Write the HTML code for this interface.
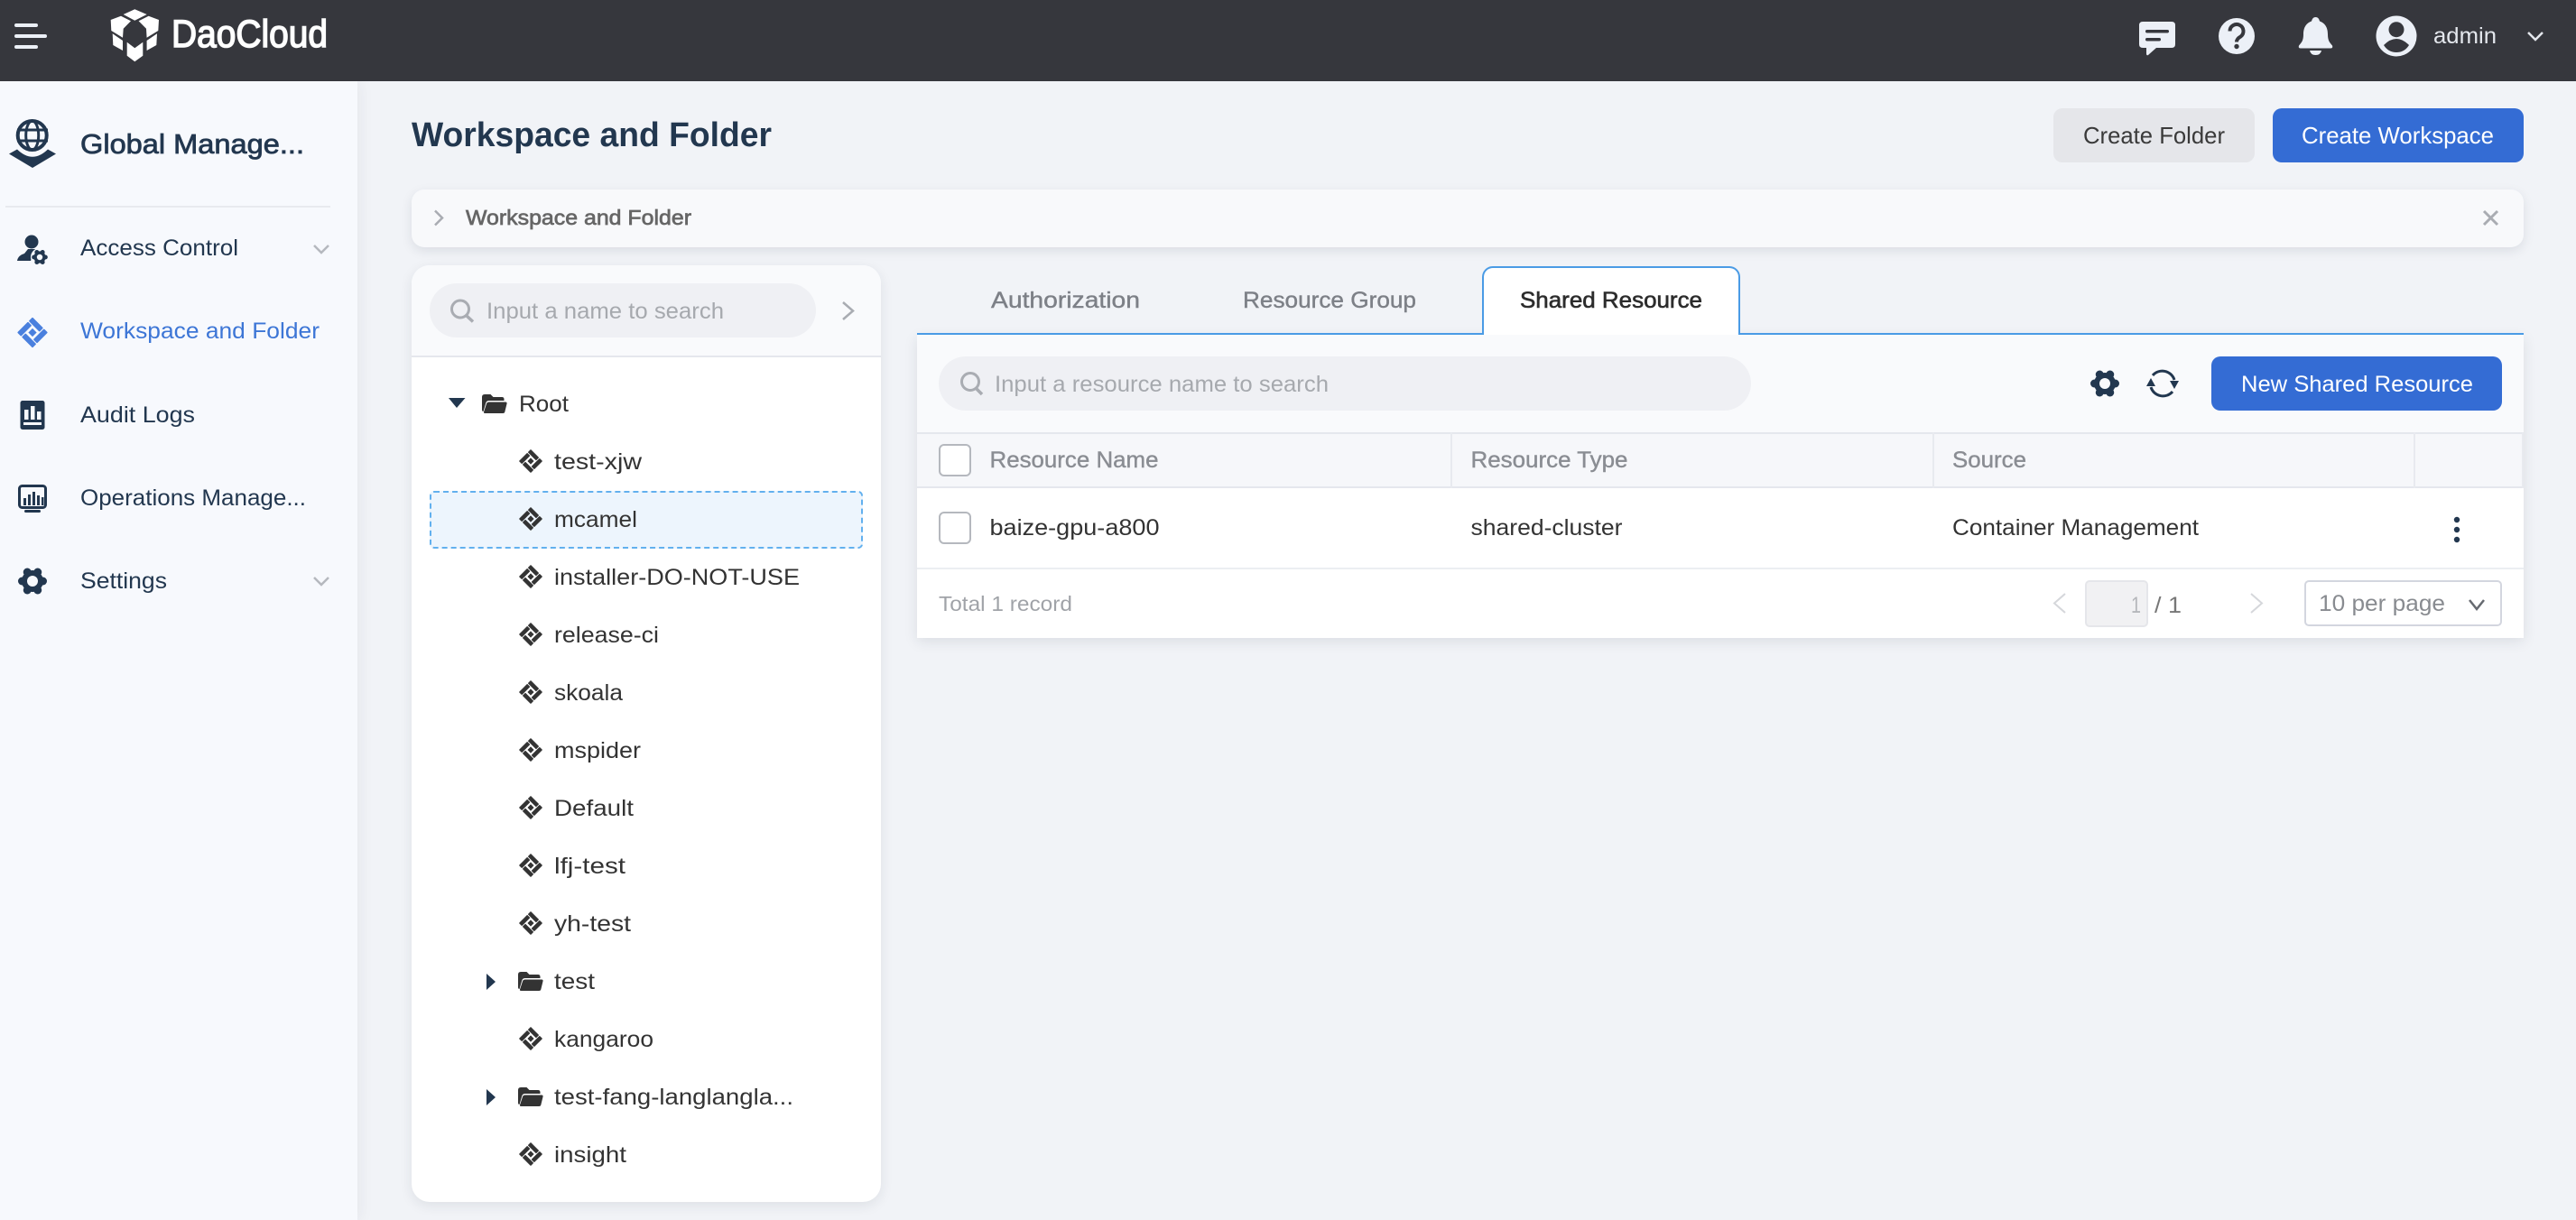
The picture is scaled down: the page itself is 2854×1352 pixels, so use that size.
<!DOCTYPE html>
<html><head><meta charset="utf-8"><style>
html,body{margin:0;padding:0;width:2854px;height:1352px;overflow:hidden;background:#f1f3f7}
.b{position:absolute;box-sizing:border-box}
svg{position:absolute;left:0;top:0}
text{font-family:"Liberation Sans",sans-serif;font-size:25px;fill:#333}
.nav{fill:#22374f}.tree{fill:#333}.ph{fill:#a6a9ae}.th{fill:#8a8d93;stroke:#8a8d93;stroke-width:.4}
</style></head><body>
<div class="b" style="left:0;top:90px;width:396px;height:1262px;background:#f7f9fd;box-shadow:4px 0 14px rgba(30,40,60,.05)"></div>
<div class="b" style="left:0;top:0;width:2854px;height:90px;background:#36373d"></div>
<div class="b" style="left:2275px;top:120px;width:223px;height:60px;background:#e5e6ea;border-radius:10px"></div>
<div class="b" style="left:2518px;top:120px;width:278px;height:60px;background:#346cd4;border-radius:10px"></div>
<div class="b" style="left:456px;top:210px;width:2340px;height:64px;background:#f8f9fb;border-radius:14px;box-shadow:0 4px 12px rgba(30,40,60,.1)"></div>
<div class="b" style="left:456px;top:294px;width:520px;height:1038px;background:#fff;border-radius:20px;box-shadow:0 4px 14px rgba(30,40,60,.09);overflow:hidden">
<div class="b" style="left:0;top:0;width:520px;height:102px;background:#f9fafc;border-bottom:2px solid #e5e7ed"></div>
<div class="b" style="left:20px;top:20px;width:428px;height:60px;background:#eff0f4;border-radius:30px"></div>
<div class="b" style="left:20px;top:250px;width:480px;height:64px;background:#edf5fd;border:2px dashed #62b0ee;border-radius:5px"></div>
</div>
<div class="b" style="left:1016px;top:371px;width:1780px;height:336px;background:#fff;box-shadow:0 4px 14px rgba(30,40,60,.1)">
<div class="b" style="left:0;top:0;width:1780px;height:108px;background:#f9fafc"></div>
<div class="b" style="left:24px;top:24px;width:900px;height:60px;background:#eff0f4;border-radius:30px"></div>
<div class="b" style="left:1434px;top:24px;width:322px;height:60px;background:#346cd4;border-radius:10px"></div>
<div class="b" style="left:0;top:108px;width:1780px;height:62px;background:#f6f7fa;border-top:2px solid #e5e7ed;border-bottom:2px solid #e5e7ed"></div>
<div class="b" style="left:591px;top:108px;width:2px;height:62px;background:#e8eaef"></div>
<div class="b" style="left:1125px;top:108px;width:2px;height:62px;background:#e8eaef"></div>
<div class="b" style="left:1658px;top:108px;width:2px;height:62px;background:#e8eaef"></div>
<div class="b" style="left:1778px;top:108px;width:2px;height:62px;background:#e8eaef"></div>
<div class="b" style="left:0;top:258px;width:1780px;height:2px;background:#eceef2"></div>
<div class="b" style="left:24px;top:121px;width:36px;height:36px;background:#fff;border:2px solid #b5b8be;border-radius:6px"></div>
<div class="b" style="left:24px;top:196px;width:36px;height:36px;background:#fff;border:2px solid #b5b8be;border-radius:6px"></div>
<div class="b" style="left:1294px;top:272px;width:70px;height:52px;background:#f1f1f3;border:2px solid #e5e6ea;border-radius:5px"></div>
<div class="b" style="left:1537px;top:272px;width:219px;height:51px;background:#fff;border:2px solid #d3d6df;border-radius:5px"></div>
</div>
<div class="b" style="left:1016px;top:369px;width:1780px;height:2px;background:#4a9be5"></div>
<div class="b" style="left:1642px;top:295px;width:286px;height:76px;background:#fff;border:2px solid #4a9be5;border-bottom:0;border-radius:12px 12px 0 0"></div>

<svg width="2854" height="1352" viewBox="0 0 2854 1352" xmlns="http://www.w3.org/2000/svg">
<defs>
<g id="ws"><g transform="rotate(45)">
<rect x="-11" y="-11" width="15.500" height="5.500" rx=".8"/><rect x="5.500" y="-11" width="5.500" height="15.500" rx=".8"/><rect x="-4.500" y="5.500" width="15.500" height="5.500" rx=".8"/><rect x="-11" y="-4.500" width="5.500" height="15.500" rx=".8"/><rect x="-3" y="-3" width="6" height="6"/>
</g></g>
<g id="fo">
<path d="M0 3Q0 0 3 0H9.500L12.500 3H22Q24.500 3 24.500 5.500V7H8Q5 7 4.300 9.500L1.500 19Q0 19 0 17Z"/>
<path d="M8 8.500H26Q28 8.500 27.500 10.500L25.300 19.500Q25 21 23 21H3.500Q1.500 21 2 19.500L5 10.500Q5.500 8.500 8 8.500Z"/>
</g>
<g id="gear">
<circle r="12"/><circle cx="11.500" r="4.500"/><circle cx="-11.500" r="4.500"/><circle cx="5.750" cy="-9.960" r="4.500"/><circle cx="-5.750" cy="-9.960" r="4.500"/><circle cx="5.750" cy="9.960" r="4.500"/><circle cx="-5.750" cy="9.960" r="4.500"/>
</g>
</defs>

<!-- top bar -->
<g fill="#ecf0f7">
<rect x="16" y="26" width="26" height="4" rx="2"/><rect x="16" y="38" width="36" height="4" rx="2"/><rect x="16" y="50" width="26" height="4" rx="2"/>
</g>
<g fill="#fff">
<polygon points="136.700,16 149.300,10.300 162.700,16 149.300,22.700"/>
<polygon points="122.700,22 134,17.700 145,23.300 136.700,31.700 136,41.700 123.300,34"/>
<polygon points="176,22 164.600,17.700 153.600,23.300 162,31.700 162.600,41.700 175.300,34"/>
<polygon points="124.700,37.300 136,45 136,56 125.300,50"/>
<polygon points="174,37.300 162.600,45 162.600,56 173.300,50"/>
<polygon points="140.700,46.700 149.300,53.300 158.300,46.700 158.300,61.700 149.300,68.300 140.700,61.700"/>
</g>
<text x="190" y="52" textLength="173" lengthAdjust="spacingAndGlyphs" style="font-size:43px;fill:#fff;stroke:#fff;stroke-width:1.500">DaoCloud</text>

<g fill="#ecf0f7">
<path d="M2374 24H2406Q2410 24 2410 28V49Q2410 53 2406 53H2389L2380 61Q2378 62 2378 59V53H2374Q2370 53 2370 49V28Q2370 24 2374 24Z"/>
<circle cx="2478" cy="40" r="20"/>
<path d="M2565.500 19Q2569 19 2570 23.500C2577 26 2579 32 2579 38C2579 45 2581 47 2584 50.500Q2585 53.500 2582 53.500H2549Q2546 53.500 2547 50.500C2550 47 2552 45 2552 38C2552 32 2554 26 2561 23.500Q2562 19 2565.500 19Z"/>
<path d="M2559 56H2572Q2571 61 2565.500 61T2559 56Z"/>
<circle cx="2655" cy="40" r="22.500"/>
</g>
<g fill="#36373d">
<rect x="2377" y="33" width="26" height="3.500" rx="1.700"/><rect x="2377" y="42" width="17" height="3.500" rx="1.700"/>
<circle cx="2478" cy="51.500" r="2.700"/>
<circle cx="2655" cy="32.700" r="8.500"/>
<path d="M2641 50Q2655 36 2669 50Q2664 58 2655 58Q2646 58 2641 50Z"/>
</g>
<path d="M2470.500 34.500A7.500 7.500 0 1 1 2482.500 40.500Q2478 43 2478 46.500" fill="none" stroke="#36373d" stroke-width="4"/>
<text x="2696" y="48" textLength="70" lengthAdjust="spacingAndGlyphs" style="font-size:25px;fill:#e4e7ed">admin</text>
<path d="M2801 36L2809 44L2817 36" fill="none" stroke="#e4e7ed" stroke-width="2.500"/>

<!-- sidebar -->
<g fill="#22374f">
<circle cx="35.700" cy="150" r="16" fill="none" stroke="#22374f" stroke-width="4"/>
<ellipse cx="35.700" cy="150" rx="7" ry="16" fill="none" stroke="#22374f" stroke-width="3"/>
<rect x="19" y="142.500" width="34" height="3"/><rect x="19" y="154.500" width="34" height="3"/>
<path d="M10 170.500L19 165.500Q36 182 53 165.500L62 170.500L36 186Z"/>
</g>
<text x="89" y="170" textLength="248" lengthAdjust="spacingAndGlyphs" class="nav" style="font-size:31px;stroke:#22374f;stroke-width:.8">Global Manage...</text>
<rect x="6" y="228" width="360" height="2" fill="#e8eaef"/>

<g fill="#22374f">
<circle cx="35" cy="268" r="7.500"/>
<path d="M19 289Q20 283 27 281L31 276H39L38 283Q35 286 34 289Z"/>
</g>
<circle cx="44" cy="285" r="10" fill="#f7f9fd"/>
<use href="#gear" fill="#22374f" transform="translate(44,285) scale(.55)"/>
<circle cx="44" cy="285" r="3.200" fill="#f7f9fd"/>
<text x="89" y="283" textLength="175" lengthAdjust="spacingAndGlyphs" class="nav">Access Control</text>
<path d="M348 272L356 280L364 272" fill="none" stroke="#b5b8be" stroke-width="2.500"/>

<use href="#ws" fill="#4a80de" transform="translate(36,368.500) scale(1.09)"/>
<text x="89" y="375" textLength="265" lengthAdjust="spacingAndGlyphs" style="fill:#3d76d6">Workspace and Folder</text>

<rect x="22.500" y="444" width="27" height="32" rx="2.500" fill="#22374f"/>
<g fill="#f7f9fd"><rect x="27" y="454" width="4.500" height="11"/><rect x="34" y="450" width="4.500" height="15"/><rect x="41" y="456" width="4.500" height="9"/><rect x="26" y="468" width="20" height="3"/></g>
<text x="89" y="468" textLength="127" lengthAdjust="spacingAndGlyphs" class="nav">Audit Logs</text>

<rect x="21.500" y="538.500" width="29" height="24" rx="3" fill="none" stroke="#22374f" stroke-width="3"/>
<g fill="#22374f"><rect x="26" y="552" width="3" height="8"/><rect x="31" y="548" width="3" height="12"/><rect x="36" y="545" width="3" height="15"/><rect x="41" y="549" width="3" height="11"/><rect x="46" y="551" width="2.500" height="9"/><rect x="27" y="565" width="18" height="3" rx="1.500"/></g>
<text x="89" y="560" textLength="250" lengthAdjust="spacingAndGlyphs" class="nav">Operations Manage...</text>

<use href="#gear" fill="#22374f" transform="translate(36,644)"/>
<circle cx="36" cy="644" r="6" fill="#f7f9fd"/>
<text x="89" y="652" textLength="96" lengthAdjust="spacingAndGlyphs" class="nav">Settings</text>
<path d="M348 640L356 648L364 640" fill="none" stroke="#b5b8be" stroke-width="2.500"/>

<!-- page header -->
<text x="456" y="162" textLength="399" lengthAdjust="spacingAndGlyphs" style="font-size:38px;font-weight:bold;fill:#22374f">Workspace and Folder</text>
<text x="2308" y="159" textLength="157" lengthAdjust="spacingAndGlyphs" style="font-size:26px;fill:#3a3a3a">Create Folder</text>
<text x="2550" y="159" textLength="213" lengthAdjust="spacingAndGlyphs" style="font-size:26px;fill:#fff">Create Workspace</text>
<path d="M482 233.500L490 241.500L482 249.500" fill="none" stroke="#a9acb2" stroke-width="2.500"/>
<text x="516" y="249" textLength="250" lengthAdjust="spacingAndGlyphs" style="font-size:23.500px;fill:#666;stroke:#666;stroke-width:.7">Workspace and Folder</text>
<path d="M2752 234L2767 249M2767 234L2752 249" stroke="#a9acb2" stroke-width="3" fill="none"/>

<!-- tree head -->
<circle cx="510" cy="342.500" r="9.500" fill="none" stroke="#a9acb2" stroke-width="3"/>
<path d="M517 350L524 356.500" stroke="#a9acb2" stroke-width="3.500"/>
<text x="539" y="353" textLength="263" lengthAdjust="spacingAndGlyphs" class="ph">Input a name to search</text>
<path d="M934 335L945 344.500L934 354" fill="none" stroke="#a9acb2" stroke-width="2.500"/>

<!-- tree -->
<path d="M497 441H515.500L506 452Z" fill="#22374f"/>
<use href="#fo" fill="#333" transform="translate(534,437)"/>
<text x="575" y="456" textLength="55" lengthAdjust="spacingAndGlyphs" class="tree">Root</text>
<g fill="#333">
<use href="#ws" transform="translate(588,511) scale(.84)"/>
<use href="#ws" transform="translate(588,575) scale(.84)"/>
<use href="#ws" transform="translate(588,639) scale(.84)"/>
<use href="#ws" transform="translate(588,703) scale(.84)"/>
<use href="#ws" transform="translate(588,767) scale(.84)"/>
<use href="#ws" transform="translate(588,831) scale(.84)"/>
<use href="#ws" transform="translate(588,895) scale(.84)"/>
<use href="#ws" transform="translate(588,959) scale(.84)"/>
<use href="#ws" transform="translate(588,1023) scale(.84)"/>
<use href="#ws" transform="translate(588,1151) scale(.84)"/>
<use href="#ws" transform="translate(588,1279) scale(.84)"/>
<use href="#fo" transform="translate(574,1077)"/>
<use href="#fo" transform="translate(574,1205)"/>
</g>
<g fill="#22374f"><path d="M539 1079V1097L549 1088Z"/><path d="M539 1207V1225L549 1216Z"/></g>
<text x="614" y="520" textLength="97" lengthAdjust="spacingAndGlyphs" class="tree">test-xjw</text>
<text x="614" y="584" textLength="92" lengthAdjust="spacingAndGlyphs" class="tree">mcamel</text>
<text x="614" y="648" textLength="272" lengthAdjust="spacingAndGlyphs" class="tree">installer-DO-NOT-USE</text>
<text x="614" y="712" textLength="116" lengthAdjust="spacingAndGlyphs" class="tree">release-ci</text>
<text x="614" y="776" textLength="76" lengthAdjust="spacingAndGlyphs" class="tree">skoala</text>
<text x="614" y="840" textLength="96" lengthAdjust="spacingAndGlyphs" class="tree">mspider</text>
<text x="614" y="904" textLength="88" lengthAdjust="spacingAndGlyphs" class="tree">Default</text>
<text x="614" y="968" textLength="79" lengthAdjust="spacingAndGlyphs" class="tree">lfj-test</text>
<text x="614" y="1032" textLength="85" lengthAdjust="spacingAndGlyphs" class="tree">yh-test</text>
<text x="614" y="1096" textLength="45" lengthAdjust="spacingAndGlyphs" class="tree">test</text>
<text x="614" y="1160" textLength="110" lengthAdjust="spacingAndGlyphs" class="tree">kangaroo</text>
<text x="614" y="1224" textLength="265" lengthAdjust="spacingAndGlyphs" class="tree">test-fang-langlangla...</text>
<text x="614" y="1288" textLength="80" lengthAdjust="spacingAndGlyphs" class="tree">insight</text>

<!-- tabs -->
<text x="1098" y="341" textLength="165" lengthAdjust="spacingAndGlyphs" style="fill:#7d8087;stroke:#7d8087;stroke-width:.4">Authorization</text>
<text x="1377" y="341" textLength="192" lengthAdjust="spacingAndGlyphs" style="fill:#7d8087;stroke:#7d8087;stroke-width:.4">Resource Group</text>
<text x="1684" y="341" textLength="202" lengthAdjust="spacingAndGlyphs" style="fill:#2c2c2c;stroke:#2c2c2c;stroke-width:.6">Shared Resource</text>

<!-- toolbar -->
<circle cx="1075" cy="423" r="9.500" fill="none" stroke="#a9acb2" stroke-width="3"/>
<path d="M1082 431L1088 437" stroke="#a9acb2" stroke-width="3.500"/>
<text x="1102" y="434" textLength="370" lengthAdjust="spacingAndGlyphs" class="ph">Input a resource name to search</text>
<use href="#gear" fill="#22374f" transform="translate(2332,425)"/>
<circle cx="2332" cy="425" r="6" fill="#f9fafc"/>
<g fill="none" stroke="#22374f" stroke-width="3"><path d="M2385 416A14 14 0 0 1 2409 421"/><path d="M2407 434A14 14 0 0 1 2383 429"/></g>
<g fill="#22374f"><path d="M2378 428H2388L2383 419Z"/><path d="M2404 422H2414L2409 431Z"/></g>
<text x="2483" y="434" textLength="257" lengthAdjust="spacingAndGlyphs" style="fill:#fff">New Shared Resource</text>

<!-- table -->
<text x="1096.500" y="518" textLength="187" lengthAdjust="spacingAndGlyphs" class="th">Resource Name</text>
<text x="1629.500" y="518" textLength="174" lengthAdjust="spacingAndGlyphs" class="th">Resource Type</text>
<text x="2163" y="518" textLength="82" lengthAdjust="spacingAndGlyphs" class="th">Source</text>
<text x="1096.500" y="593" textLength="188" lengthAdjust="spacingAndGlyphs" class="tree">baize-gpu-a800</text>
<text x="1629.500" y="593" textLength="168" lengthAdjust="spacingAndGlyphs" class="tree">shared-cluster</text>
<text x="2163" y="593" textLength="273" lengthAdjust="spacingAndGlyphs" class="tree">Container Management</text>
<g fill="#22374f"><circle cx="2722" cy="576" r="3.200"/><circle cx="2722" cy="587" r="3.200"/><circle cx="2722" cy="598" r="3.200"/></g>

<!-- footer -->
<text x="1040" y="677" textLength="148" lengthAdjust="spacingAndGlyphs" style="font-size:23px;fill:#a0a3a8">Total 1 record</text>
<path d="M2288 658L2276 668.500L2288 679" fill="none" stroke="#d5d7db" stroke-width="2"/>
<text x="2361" y="679" textLength="11" lengthAdjust="spacingAndGlyphs" style="fill:#b5b7bb">1</text>
<text x="2387" y="679" textLength="30" lengthAdjust="spacingAndGlyphs" style="fill:#777">/ 1</text>
<path d="M2494 658L2506 668.500L2494 679" fill="none" stroke="#d5d7db" stroke-width="2"/>
<text x="2569" y="677" textLength="140" lengthAdjust="spacingAndGlyphs" style="fill:#888b90">10 per page</text>
<path d="M2736 665L2744 675L2752 665" fill="none" stroke="#666a70" stroke-width="2.500"/>
</svg>
</body></html>
